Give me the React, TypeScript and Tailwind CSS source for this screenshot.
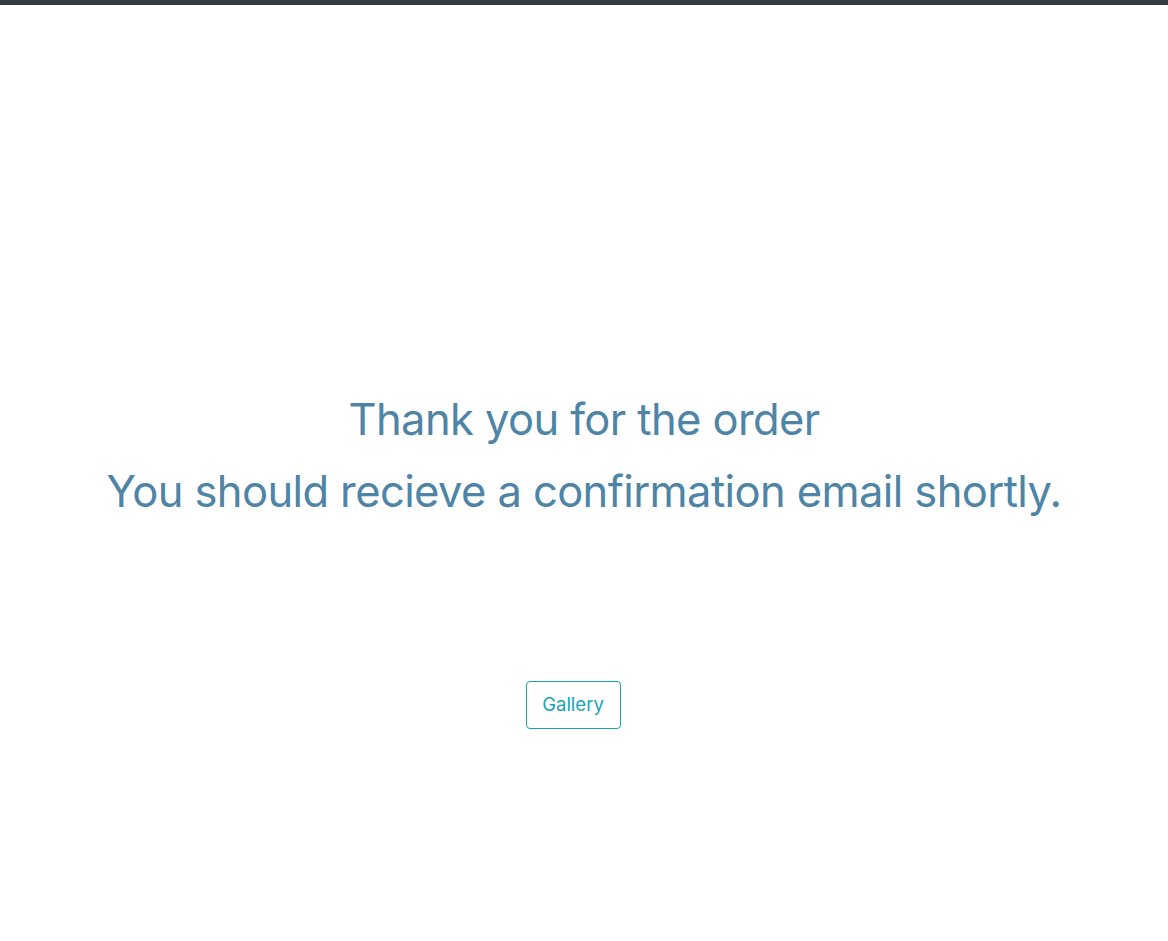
export default function App() {
  return (
    <div className="min-h-[941px] w-full bg-white" style={{ fontFamily: "Inter, 'Noto Sans', sans-serif" }}>
      <div className="h-[5px] w-full bg-[#343a40]" />
      <div className="flex flex-col items-center pt-[386px]">
        <h1 className="text-[43.5px] leading-[56px] text-[#4e84a6] tracking-[-0.6px]">Thank you for the order</h1>
        <h1 className="mt-[16px] text-[43.5px] leading-[56px] text-[#4e84a6] tracking-[-0.6px]">You should recieve a confirmation email shortly.</h1>
        <button className="mt-[162px] mr-[22px] h-[48px] w-[95px] rounded-[4px] border border-[#17a2b8] text-[18.5px] text-[#17a2b8]">
          Gallery
        </button>
      </div>
    </div>
  );
}
